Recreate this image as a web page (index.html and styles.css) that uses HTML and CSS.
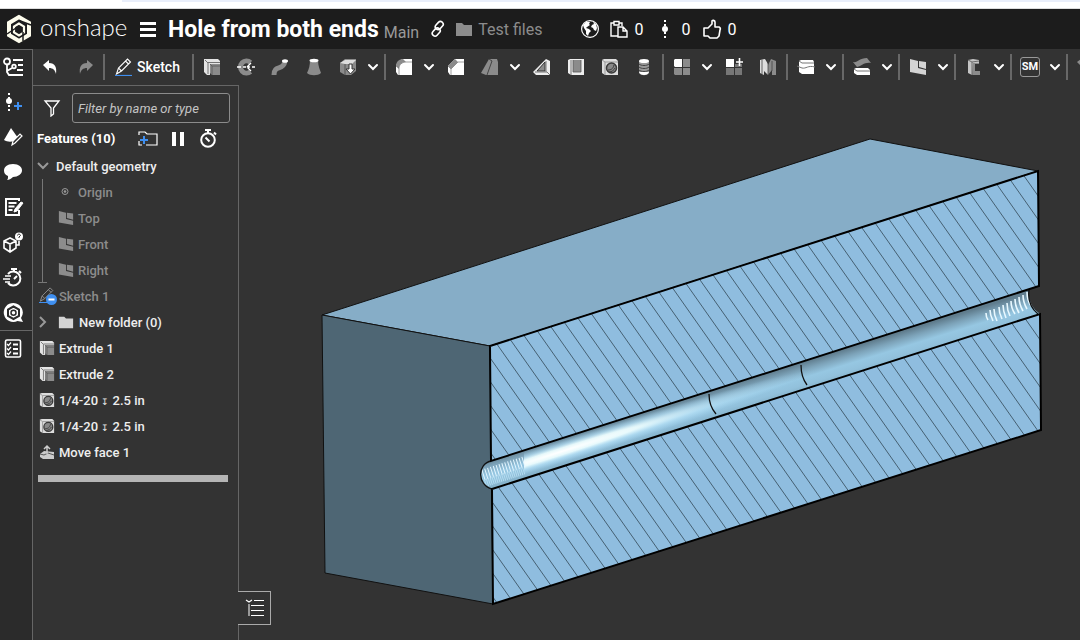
FILE: index.html
```html
<!DOCTYPE html>
<html lang="en">
<head>
    <meta charset="UTF-8">
    <meta name="viewport" content="width=device-width, initial-scale=1.0">
    <title>Hole from both ends</title>
    <link rel="stylesheet" href="styles.css">
</head>
<body>
    <!-- shared icons -->
    <svg class="sprite" aria-hidden="true">
        <symbol id="chevron" viewBox="0 0 16 16"><path d="M4 6l4 4 4-4" fill="none" stroke="#fff" stroke-width="2" stroke-linecap="round"/></symbol>
        <symbol id="extrude" viewBox="0 0 18 18">
            <path d="M1 1h14l2 2v3H7v11H4l-3-3z" fill="#e4e4e4"/>
            <path d="M2 2l3 3v11M5 4.500h12" fill="none" stroke="#555" stroke-width=".8"/>
            <path d="M7 6h10v11H9l-2-2z" fill="#8b8b8b"/>
            <path d="M7 6l2 2h8M9 8v9" fill="none" stroke="#555" stroke-width=".8"/>
        </symbol>
        <symbol id="hole" viewBox="0 0 18 18">
            <path d="M1 2l2-1h12l2 2v14H4l-3-2z" fill="#ddd"/>
            <path d="M1 2l3 2h13M4 4v13" fill="none" stroke="#999"/>
            <circle cx="10.500" cy="10" r="5" fill="#888" stroke="#3a3a3a" stroke-width="1.500"/>
            <path d="M7 12c3 0 5-1 6-5M8 14c3 0 5-2 6-4" fill="none" stroke="#3a3a3a"/>
        </symbol>
        <symbol id="plane" viewBox="0 0 18 18">
            <path d="M1 1l8 2v7l8 2v5L1 14z" fill="currentColor"/>
            <path d="M10 3l7 1v7l-7-2z" fill="currentColor"/>
        </symbol>
        <symbol id="folder" viewBox="0 0 18 16"><path d="M1 2h6l2 2h8v11H1z" fill="currentColor"/></symbol>
        <symbol id="pencil" viewBox="0 0 18 18">
            <path d="M1.500 16l2-6 9-9 3 3-9 9zM10.500 3l3 3M3.500 10l3 3" fill="none" stroke="currentColor" stroke-width="1.100"/>
            <path d="M0 17.500h17" stroke="#3f8ff0" stroke-width="1.200"/>
        </symbol>
    </svg>

    <div class="browser-strip"><span></span></div>

    <header class="topbar">
        <a class="brand" href="#">
            <svg width="26" height="30" viewBox="0 0 26 30">
                <path d="M13 3L3 9v12l10 6 10-6V9z" fill="none" stroke="#fdfcec" stroke-width="4"/>
                <path d="M13 9.500L8 12.500v6l5 3 5-3v-6z" fill="#1c1c1c" stroke="#fdfcec" stroke-width="2.200"/>
                <path d="M13 12l-2.500 1.500v3.500M1 20l9-6M25 11L13 6.500M17 27V18" fill="none" stroke="#1c1c1c" stroke-width="1.500"/>
            </svg>
            <span>onshape</span>
        </a>
        <button class="menu" aria-label="Menu"><i></i><i></i><i></i></button>
        <h1>Hole from both ends</h1>
        <span class="workspace">Main</span>
        <button class="link" aria-label="Link">
            <svg width="16" height="18" viewBox="0 0 16 18" fill="none" stroke="#fff" stroke-width="1.600">
                <rect x="6.500" y="1" width="5.500" height="9" rx="2.700" transform="rotate(42 9.200 5.500)"/>
                <rect x="3.500" y="7.500" width="5.500" height="9" rx="2.700" transform="rotate(42 6.200 12)"/>
            </svg>
        </button>
        <a class="location" href="#"><svg width="18" height="16"><use href="#folder"/></svg>Test files</a>
        <div class="stats">
            <svg width="20" height="20" viewBox="0 0 20 20">
                <circle cx="10" cy="10" r="8.400" fill="none" stroke="#fff" stroke-width="1.200"/>
                <path d="M3 6l3-3 4 0-1 2 1 1-3 2-1 1 3 1 2 2-2 2-1 3-2-2v-3L4 9zM13 3l3 2 1 4-1 3-2-1-1-2-2-1 1-2 2-1z" fill="#fff"/>
            </svg>
            <span class="stat copies">
                <svg width="20" height="20" viewBox="0 0 20 20" fill="none" stroke="#fff" stroke-width="1.400">
                    <path d="M9 17H2V4h3M10 4h3v3M5 2.500h5V6H5z"/>
                    <path d="M9 8h5l4 4v6H9zM14 8v4h4"/>
                </svg>0</span>
            <span class="stat versions">
                <svg width="12" height="20" viewBox="0 0 12 20">
                    <path d="M6 1v18" stroke="#fff" stroke-width="2" stroke-dasharray="2 2"/>
                    <circle cx="6" cy="10" r="3" fill="#fff"/>
                </svg>0</span>
            <span class="stat likes">
                <svg width="20" height="20" viewBox="0 0 20 20" fill="none" stroke="#fff" stroke-width="1.600" stroke-linejoin="round">
                    <path d="M2 9h4l4-4V2c0-1 3-1 3 1v5h4q2 1 1 3l-1 6-2 2H8l-2-2H2z"/>
                </svg>0</span>
        </div>
    </header>

    <div class="workspace-area">
        <nav class="rail">
            <button aria-label="Feature list">
                <svg width="22" height="22" viewBox="0 0 22 22" fill="none" stroke="#fff" stroke-width="1.800">
                    <circle cx="5" cy="4.500" r="3"/><circle cx="12" cy="9.500" r="1.800"/>
                    <path d="M5 7.500V15l2 3h4M5 14l5-3M11 3h10M16 8h5M15 13h6M11 18h10"/>
                </svg>
            </button>
            <button aria-label="Versions">
                <svg width="22" height="22" viewBox="0 0 22 22">
                    <path d="M7 1v18" stroke="#fff" stroke-width="2" stroke-dasharray="2 2"/>
                    <circle cx="7" cy="9" r="3" fill="#fff"/><path d="M12 14h8M16 10v8" stroke="#3f8ff0" stroke-width="2"/>
                </svg>
            </button>
            <button aria-label="Appearance">
                <svg width="22" height="22" viewBox="0 0 22 22">
                    <path d="M9 1L2 13c3 2 7 2 10 1l4-3z" fill="#fff"/>
                    <path d="M10 18l1-4 7-7 2 2-7 7z" fill="#2b2b2b" stroke="#fff" stroke-width="1.200"/>
                </svg>
            </button>
            <button aria-label="Comments">
                <svg width="22" height="22" viewBox="0 0 22 22"><path d="M11 2c6 0 9 3 9 6.500S16 15 11 15c-2 2-4 3-6 3 1-1 1-2 1-4-3-1-4-3-4-5.500C2 5 5 2 11 2z" fill="#fff"/></svg>
            </button>
            <button aria-label="Notes">
                <svg width="22" height="22" viewBox="0 0 22 22" fill="none" stroke="#fff" stroke-width="2">
                    <path d="M17 4V2H4v16h13v-5M6.500 6h8M6.500 9.500h6M6.500 13h4"/>
                    <path d="M12 15l1-3 6-7 2 1-6 8z" fill="#fff" stroke-width="1"/>
                </svg>
            </button>
            <button aria-label="Configurations">
                <svg width="22" height="22" viewBox="0 0 22 22" fill="none" stroke="#fff" stroke-width="1.600">
                    <path d="M8 6L2 9v7l6 4 6-4V9zM2 9l6 3 6-3M8 12v8"/>
                    <path d="M14 13h3V9"/><circle cx="17" cy="4.500" r="4" fill="#fff" stroke="none"/>
                    <path d="M15.500 3.500c0-2 3-1.500 3 0L17 5v1" stroke="#2b2b2b" stroke-width="1"/>
                </svg>
            </button>
            <button aria-label="Performance">
                <svg width="22" height="22" viewBox="0 0 22 22" fill="none" stroke="#fff" stroke-width="2">
                    <path d="M6 7a7 7 0 1 1 0 9M9 2h6M12 2v3M17 4l2 2M12 12l3-3"/><path d="M3 9h6M1 12h7M3 15h5" stroke-width="1.300"/>
                </svg>
            </button>
            <button aria-label="Help">
                <svg width="22" height="22" viewBox="0 0 22 22">
                    <path d="M11.500 1a9.500 9.500 0 1 0 4 18l5.500 1-2-4A9.500 9.500 0 0 0 11.500 1z" fill="#fff"/>
                    <path d="M11.500 4.500l-5.500 3v6.500l5.500 3 5.500-3V7.500z" fill="none" stroke="#2b2b2b" stroke-width="2"/>
                    <circle cx="11.500" cy="10.800" r="2.500" fill="none" stroke="#2b2b2b" stroke-width="1.500"/>
                </svg>
            </button>
            <button class="split" aria-label="Checklist">
                <svg width="22" height="22" viewBox="0 0 22 22" fill="none" stroke="#fff" stroke-width="1.600">
                    <rect x="3.500" y="2" width="15" height="17" rx="1.500"/><path d="M11 6.500h5M11 11h5M11 15.500h5" stroke-width="2"/>
                    <path d="M5 6l1.500 1.500L9 4.500M5 10.500l1.500 1.500L9 9M5 15l1.500 1.500L9 13.500" stroke-width="1.200"/>
                </svg>
            </button>
        </nav>

        <div class="content">
            <div class="toolbar">
                <button class="tool"><svg width="18" height="18" viewBox="0 0 18 18"><path d="M1 7l6-5v3c6 0 8 4 7 11-1-4-3-6-7-6v3z" fill="#fff"/></svg></button>
                <button class="tool"><svg width="18" height="18" viewBox="0 0 18 18"><path d="M17 7l-6-5v3C5 5 3 9 4 16c1-4 3-6 7-6v3z" fill="#8b8b8b"/></svg></button>
                <hr>
                <button class="sketch"><svg width="18" height="18"><use href="#pencil"/></svg>Sketch</button>
                <hr>
                <button class="tool"><svg width="18" height="18"><use href="#extrude"/></svg></button>
                <button class="tool"><svg width="18" height="18" viewBox="0 0 18 18"><path d="M13.500 4.500a6 6 0 1 0 0 9" fill="none" stroke="#8b8b8b" stroke-width="5"/><path d="M0 9h4M6 9h3M11 9h2M15 9h3M10 9l4-4M10 9l4 4" stroke="#fff" stroke-width="1.300"/></svg></button>
                <button class="tool"><svg width="18" height="18" viewBox="0 0 18 18"><path d="M3 17c0-11 9-3 11-14" fill="none" stroke="#8b8b8b" stroke-width="5"/><ellipse cx="14" cy="3" rx="3" ry="1.800" fill="#fff"/></svg></button>
                <button class="tool"><svg width="18" height="18" viewBox="0 0 18 18"><path d="M5 2h8c0 6 2 10 3 13-3 3-11 3-14 0 2-4 3-8 3-13z" fill="#8b8b8b"/><ellipse cx="9" cy="2.500" rx="4.500" ry="1.800" fill="#fff"/></svg></button>
                <button class="tool"><svg width="18" height="18" viewBox="0 0 18 18"><path d="M1 5l5-4h11v12l-5 4H6l-5-3z" fill="#8b8b8b"/><path d="M1 5l5-3h11l-4 4H6z" fill="#ddd"/><path d="M6 6v11" stroke="#555"/><path d="M10 6h3v5h3l-4.500 5L7 11h3z" fill="#fff" stroke="#333"/></svg></button>
                <button class="more"><svg width="16" height="16"><use href="#chevron"/></svg></button>
                <hr>
                <button class="tool"><svg width="18" height="18" viewBox="0 0 18 18"><path d="M7 1h10v16H3l-2-3V7z" fill="#fff"/><path d="M1 8c0-4 3-7 7-7l3 3c-5 0-7 3-7 7z" fill="#8b8b8b"/><path d="M1 8l3 2v7M4 10c0-3 3-6 7-6h6" fill="none" stroke="#777" stroke-width=".7"/></svg></button>
                <button class="more"><svg width="16" height="16"><use href="#chevron"/></svg></button>
                <button class="tool"><svg width="18" height="18" viewBox="0 0 18 18"><path d="M8 1h9v16H3l-2-3V8z" fill="#fff"/><path d="M1 8l7-7 3 3-7 7z" fill="#8b8b8b"/><path d="M1 8l3 3v6M4 11l7-7h6" fill="none" stroke="#777" stroke-width=".7"/></svg></button>
                <button class="tool"><svg width="18" height="18" viewBox="0 0 18 18"><path d="M8 1h8l1 3v13H5l-5-2z" fill="#8b8b8b"/><path d="M8 1l3 2-5 14" fill="none" stroke="#444"/></svg></button>
                <button class="more"><svg width="16" height="16"><use href="#chevron"/></svg></button>
                <button class="tool"><svg width="18" height="18" viewBox="0 0 18 18"><path d="M13 1l4 2v14H3l-3-3z" fill="#eee"/><path d="M12 4v9H4z" fill="#8b8b8b" stroke="#333"/><path d="M13 3v11M2 14l12 0 3 3" fill="none" stroke="#777"/></svg></button>
                <button class="tool"><svg width="18" height="18" viewBox="0 0 18 18"><path d="M1 2l2-1h14v16H4l-3-2z" fill="#eee"/><path d="M6 2h8v12H6z" fill="#8b8b8b"/><path d="M4 2v15M6 2v12h8V2" fill="none" stroke="#555" stroke-width=".8"/></svg></button>
                <button class="tool"><svg width="18" height="18"><use href="#hole"/></svg></button>
                <button class="tool"><svg width="18" height="18" viewBox="0 0 18 18"><path d="M4 3v12c2 3 8 3 10 0V3z" fill="#999"/><ellipse cx="9" cy="3" rx="5" ry="2" fill="#fff"/><path d="M4 14c1 4 9 4 10 0" fill="#fff"/><path d="M4 6c2 2 8 2 10 0M4 9c2 2 8 2 10 0M4 12c2 2 8 2 10 0" fill="none" stroke="#444"/></svg></button>
                <hr>
                <button class="tool"><svg width="18" height="18" viewBox="0 0 18 18"><path d="M1 2l1-1h7v8H2l-1-1z" fill="#fff"/><path d="M10 1h7v8h-7zM1 10h8v7H2l-1-1zM10 10h7v7h-7z" fill="#8b8b8b"/></svg></button>
                <button class="more"><svg width="16" height="16"><use href="#chevron"/></svg></button>
                <button class="tool"><svg width="18" height="18" viewBox="0 0 18 18"><path d="M1 1h8v8H1z" fill="#fff"/><path d="M10 6h7v3h-7zM1 10h8v7H1zM10 10h7v7h-7z" fill="#777"/><path d="M11 4h7M14.500 0v8" stroke="#fff" stroke-width="1.600"/></svg></button>
                <button class="tool"><svg width="18" height="18" viewBox="0 0 18 18"><path d="M1 2l5-1 3 5v11l-4-4v4l-4-2z" fill="#ddd"/><path d="M17 3l-5-2-3 6v10l4-5v5h4z" fill="#8b8b8b"/><path d="M3 2v14M9 1v16M13 3v10" stroke="#444" stroke-width=".8"/></svg></button>
                <hr>
                <button class="tool"><svg width="18" height="18" viewBox="0 0 18 18"><path d="M2 3l2-1h12l1 2v12H5l-3-2z" fill="#fff"/><path d="M2 3l3 2h12M0 8l5 2c4 1 6-3 13-1" fill="none" stroke="#777"/></svg></button>
                <button class="more"><svg width="16" height="16"><use href="#chevron"/></svg></button>
                <hr>
                <button class="tool"><svg width="18" height="18" viewBox="0 0 18 18"><path d="M0 4c5 1 6-4 14-4l4 5c-7-1-9 3-14 4z" fill="#8b8b8b"/><path d="M1 11l2-1h12l2 2v5H4l-3-2z" fill="#fff"/><path d="M1 11l3 2h13" fill="none" stroke="#777"/></svg></button>
                <button class="more"><svg width="16" height="16"><use href="#chevron"/></svg></button>
                <hr>
                <button class="tool"><svg width="18" height="18"><use href="#plane"/></svg></button>
                <button class="more"><svg width="16" height="16"><use href="#chevron"/></svg></button>
                <hr>
                <button class="tool"><svg width="18" height="18" viewBox="0 0 18 18"><path d="M3 2l5-1 6 1v4h-4v7h5v4H7l-4-2z" fill="#c4c4c4"/><path d="M8 5h6v1h-4v7h5v4H7z" fill="#8b8b8b"/><path d="M3 2l4 2v13M7 4l7-1" fill="none" stroke="#555" stroke-width=".8"/></svg></button>
                <button class="more"><svg width="16" height="16"><use href="#chevron"/></svg></button>
                <hr>
                <button class="tool"><span class="sm">SM</span></button>
                <button class="more"><svg width="16" height="16"><use href="#chevron"/></svg></button>
                <hr>
                <button class="tool"><svg width="18" height="18" viewBox="0 0 18 18"><path d="M0 4l4-3 6 5-4 4z" fill="#8b8b8b"/><path d="M3 12h9v5H3z" fill="#ddd"/></svg></button>
            </div>

            <div class="stage">
                <aside class="panel">
                    <div class="filter">
                        <label for="filterInput" aria-label="Filter"><svg width="18" height="18" viewBox="0 0 18 18"><path d="M2 2h14l-5.500 7v6L8 17V9z" fill="none" stroke="#fff" stroke-width="1.300"/></svg></label>
                        <input type="text" id="filterInput" placeholder="Filter by name or type">
                    </div>
                    <div class="features">
                        <h2>Features (10)</h2>
                        <button aria-label="Add folder"><svg width="20" height="18" viewBox="0 0 20 18"><path d="M1 6V3h6l2 2h10v11H8M1 12v4h3" fill="none" stroke="#fff" stroke-width="1.200"/><path d="M2 11h8M6 7v8" stroke="#3f8ff0" stroke-width="2"/></svg></button>
                        <button aria-label="Pause"><svg width="20" height="18" viewBox="0 0 20 18"><path d="M4 3h4v14H4zM12 3h4v14h-4z" fill="#fff"/></svg></button>
                        <button aria-label="Regeneration times"><svg width="20" height="20" viewBox="0 0 20 20"><circle cx="10" cy="12" r="6.800" fill="none" stroke="#fff" stroke-width="2"/><path d="M7 2h6M10 2v3M16 4.500l2 2M7.500 9.500l4 4" stroke="#fff" stroke-width="2"/></svg></button>
                    </div>
                    <ul class="tree">
                        <li class="group"><svg width="16" height="16" viewBox="0 0 16 16"><path d="M3 5l5 5 5-5" fill="none" stroke="#999" stroke-width="2"/></svg>Default geometry</li>
                        <li class="children">
                            <ul>
                                <li><svg width="16" height="16" viewBox="0 0 16 16"><circle cx="7" cy="7.500" r="3" fill="none" stroke="#999"/><circle cx="7" cy="7.500" r="1.300" fill="#999"/></svg>Origin</li>
                                <li><svg width="16" height="16"><use href="#plane"/></svg>Top</li>
                                <li><svg width="16" height="16"><use href="#plane"/></svg>Front</li>
                                <li><svg width="16" height="16"><use href="#plane"/></svg>Right</li>
                            </ul>
                        </li>
                        <li class="muted"><svg width="18" height="18" viewBox="0 0 18 18"><use href="#pencil" width="16" height="16"/><circle cx="12.500" cy="12.500" r="5.500" fill="#3f8ff0"/><path d="M9.500 12.500h6" stroke="#fff" stroke-width="2"/></svg>Sketch 1</li>
                        <li class="group"><svg width="16" height="16" viewBox="0 0 16 16"><path d="M5 3l5 5-5 5" fill="none" stroke="#999" stroke-width="2"/></svg><svg class="folder" width="16" height="16"><use href="#folder"/></svg>New folder (0)</li>
                        <li><svg width="16" height="16"><use href="#extrude"/></svg>Extrude 1</li>
                        <li><svg width="16" height="16"><use href="#extrude"/></svg>Extrude 2</li>
                        <li><svg width="16" height="16"><use href="#hole"/></svg><span>1/4-20 <span class="depth">↧</span> 2.5 in</span></li>
                        <li><svg width="16" height="16"><use href="#hole"/></svg><span>1/4-20 <span class="depth">↧</span> 2.5 in</span></li>
                        <li><svg width="16" height="16" viewBox="0 0 16 16"><path d="M1 10l4-3 10 1v7H4l-3-2z" fill="#ccc"/><path d="M1 10l4 1 4-2 6 2" fill="none" stroke="#555"/><path d="M8 10V3M5 5l3-3 3 3" fill="none" stroke="#ccc" stroke-width="1.500"/></svg>Move face 1</li>
                    </ul>
                    <div class="rollback"></div>
                </aside>

                <main class="canvas">
                    <svg class="model" viewBox="239 85 841 555" preserveAspectRatio="xMinYMin meet">
                        <defs>
                            <clipPath id="section">
                                <path d="M490 346l548-175 1 115-548 175zM492 489l548-175 1 116-548 174z"/>
                            </clipPath>
                            <linearGradient id="bore" gradientUnits="userSpaceOnUse" x1="700" y1="394" x2="708" y2="420">
                                <stop offset="0" stop-color="#607d8e"/>
                                <stop offset=".25" stop-color="#7ca2b8"/>
                                <stop offset=".55" stop-color="#96c7e2"/>
                                <stop offset=".8" stop-color="#92c1dc"/>
                                <stop offset="1" stop-color="#86b3cc"/>
                            </linearGradient>
                            <radialGradient id="shine" gradientUnits="userSpaceOnUse" cx="0" cy="0" r="1" gradientTransform="translate(560 452) rotate(-17.700) scale(270 11)">
                                <stop offset="0" stop-color="#fff"/>
                                <stop offset=".3" stop-color="#f0ffff" stop-opacity=".9"/>
                                <stop offset=".6" stop-color="#c4ecff" stop-opacity=".5"/>
                                <stop offset="1" stop-color="#b0e0fa" stop-opacity="0"/>
                            </radialGradient>
                        </defs>
                        <path d="M322 315L870 139l168 32-548 175z" fill="#86adc7" stroke="#111"/>
                        <path d="M322 315l168 31 3 258-168-31z" fill="#4e6674" stroke="#111"/>
                        <path d="M490 346l548-175 1 115-548 175zM492 489l548-175 1 116-548 174z" fill="#8fbddf"/>
                        <path id="hatch" clip-path="url(#section)" fill="none" stroke="#466072"/>
                        <path d="M491 461l538-172q-2 16 11 25L492 489c-15-3-15-25-1-28z" fill="url(#bore)"/>
                        <path d="M524 450.500l500-160v28l-500 160z" fill="url(#shine)"/>
                        <!-- threads -->
                        <path d="M483 475l41-13" stroke="#e4f6ff" stroke-width="11" stroke-dasharray="1 2" fill="none"/>
                        <path d="M485 483l39-12.500" stroke="#b4dcf0" stroke-width="8" stroke-dasharray="1 1" fill="none"/>
                        <path d="M986 313q0 4 2 7m2-10q0 5 3 11m1-12q0 6 3 12m2-14q0 6 3 12m1-14q0 6 3 13m1-15q0 7 3 13m1-15q0 7 4 13m0-15q0 7 4 14m0-16q0 7 4 14m0-16q0 7 4 14m0-17q0 8 4 14" fill="none" stroke="#e8f8ff" stroke-width="1.600"/>
                        <path d="M491 461c-14 3-14 24 1 28M709 394q0 12 7 20M801 365q0 12 6 20M1029 290q-2 15 9 24" fill="none" stroke="#111" stroke-width="1.300"/>
                        <path d="M1038 171l1 115-548 175-1-115zM1040 314l1 116-548 174-1-115z" fill="none" stroke="#000" stroke-width="2"/>
                    </svg>
                    <button class="list-tab" aria-label="Parts list">
                        <svg width="20" height="20" viewBox="0 0 20 20"><path d="M5 6v12" stroke="#999" stroke-width="2"/><path d="M2 2l3 2 3-2M10 2.500h10M7 7.500h13M7 12.500h13M7 17.500h13" fill="none" stroke="#fff" stroke-width="1.200"/></svg>
                    </button>
                </main>
            </div>
        </div>
    </div>

    <script>
        // section hatch: parallel lines, clipped to the cut faces
        const hatch = document.getElementById('hatch');
        const spacing = 16.55;
        let lines = '';
        for (let i = 0; i < 54; i++) {
            lines += `M${143.1 + i * spacing} 100l380 540`;
        }
        hatch.setAttribute('d', lines);
    </script>
</body>
</html>
```

FILE: styles.css
```css
* {
    box-sizing: border-box;
}
body {
    font-family: Roboto, Arial, sans-serif;
    font-size: 14px;
    background-color: #333333;
    color: #ffffff;
    display: flex;
    flex-direction: column;
    height: 100vh;
    margin: 0;
    overflow: hidden;
}
button {
    display: flex;
    align-items: center;
    justify-content: center;
    padding: 0;
    border: none;
    background: none;
    color: inherit;
    font: inherit;
    cursor: pointer;
}
svg {
    display: block;
    flex-shrink: 0;
}
a {
    color: inherit;
    text-decoration: none;
}
ul {
    list-style: none;
    margin: 0;
    padding: 0;
}
.sprite {
    display: none;
}
.browser-strip {
    flex-shrink: 0;
    height: 9px;
    background-color: #ffffff;
    border-bottom: 1px solid #dddddd;
}
.browser-strip span {
    display: block;
    height: 2px;
    margin-left: 122px;
    background-color: #e9eefa;
}

/* document bar */
.topbar {
    display: flex;
    align-items: center;
    flex-shrink: 0;
    height: 40px;
    padding-left: 6px;
    background-color: #1c1c1c;
    white-space: nowrap;
}
.brand {
    display: flex;
    align-items: center;
    gap: 8px;
    width: 134px;
}
.brand span {
    font-family: Lato, sans-serif;
    font-size: 24px;
    font-weight: 300;
    line-height: 28px;
    padding-bottom: 4px;
}
.menu {
    flex-direction: column;
    gap: 3px;
    width: 16px;
}
.menu i {
    width: 16px;
    height: 3px;
    background-color: #ffffff;
}
.topbar h1 {
    margin: 0 0 0 12px;
    font-size: 23px;
    font-weight: bold;
}
.workspace {
    margin-left: 5px;
    padding-top: 6px;
    font-size: 16px;
    color: #999999;
}
.link {
    margin-left: 11px;
}
.location {
    display: flex;
    align-items: center;
    gap: 5px;
    margin-left: 9px;
    font-size: 16px;
    color: #8c8c8c;
}
.stats {
    display: flex;
    align-items: center;
    margin-left: 38px;
    font-size: 16px;
}
.stat {
    display: flex;
    align-items: center;
    gap: 5px;
}
.copies {
    margin-left: 9px;
}
.versions {
    gap: 10px;
    margin-left: 16px;
}
.likes {
    margin-left: 12px;
}

.workspace-area {
    display: flex;
    flex: 1;
    min-height: 0;
}
.rail {
    width: 33px;
    flex-shrink: 0;
    border-top: 1px solid #666666;
    border-right: 1px solid #666666;
    background-color: #2b2b2b;
}
.rail button {
    width: 100%;
    height: 35px;
    padding-right: 6px;
}
.rail .split {
    height: 36px;
    border-top: 1px solid #666666;
}
.content {
    display: flex;
    flex-direction: column;
    flex: 1;
    min-width: 0;
}

/* tools */
.toolbar {
    display: flex;
    align-items: center;
    flex-shrink: 0;
    height: 36px;
    padding-left: 1px;
    overflow: hidden;
}
.toolbar hr {
    flex-shrink: 0;
    width: 2px;
    height: 26px;
    margin: 0 1px;
    border: none;
    background-color: #686868;
}
.tool {
    flex-shrink: 0;
    width: 34px;
    height: 34px;
    color: #d4d4d4;
}
.more {
    flex-shrink: 0;
    width: 18px;
    height: 34px;
    padding-right: 2px;
}
.sketch {
    flex-shrink: 0;
    gap: 4px;
    width: 85px;
    height: 34px;
    padding-right: 2px;
    font-weight: 500;
}
.sm {
    width: 20px;
    height: 20px;
    border: 1px solid #999999;
    border-radius: 3px;
    color: #ffffff;
    font-size: 11px;
    font-weight: bold;
    line-height: 18px;
}

.stage {
    display: flex;
    flex: 1;
    min-height: 0;
}
.panel {
    width: 206px;
    flex-shrink: 0;
    border-top: 1px solid #666666;
    border-right: 1px solid #666666;
}
.filter {
    display: flex;
    align-items: center;
    gap: 11px;
    padding: 7px 8px 0 10px;
}
.filter input {
    flex: 1;
    min-width: 0;
    height: 30px;
    padding: 0 5px;
    border: 1px solid #8c8c8c;
    border-radius: 3px;
    background: none;
    color: #ffffff;
    font: italic 13px Roboto, Arial, sans-serif;
}
.filter input::placeholder {
    color: #c4c4c4;
}
.features {
    display: flex;
    align-items: center;
    gap: 10px;
    height: 30px;
    padding-left: 4px;
}
.features h2 {
    width: 91px;
    margin: 0;
    font-size: 13px;
    font-weight: bold;
}
.tree {
    font-size: 13px;
    font-weight: 500;
    color: #eeeeee;
}
.tree li {
    display: flex;
    align-items: center;
    gap: 4px;
    height: 26px;
    padding-left: 6px;
    white-space: nowrap;
}
.tree .group {
    gap: 5px;
    padding-left: 2px;
}
.tree .folder {
    margin-left: 2px;
    color: #d4d4d4;
}
.tree .depth {
    font-size: 9px;
}
.tree .children {
    height: auto;
    padding-left: 9px;
    color: #8c8c8c;
}
.children ul {
    flex: 1;
    border-left: 1px solid #777777;
}
.children ul::after {
    content: '';
    display: block;
    width: 9px;
    height: 1px;
    margin: -1px 0 0 -5px;
    background-color: #777777;
}
.children ul li {
    padding-left: 15px;
}
.tree .muted {
    gap: 2px;
    color: #8c8c8c;
}
.rollback {
    height: 7px;
    margin: 10px 10px 0 5px;
    background-color: #b5b5b5;
}

.canvas {
    position: relative;
    flex: 1;
    min-width: 0;
}
.model {
    width: 100%;
    height: 100%;
}
.list-tab {
    position: absolute;
    left: -1px;
    bottom: 15px;
    width: 33px;
    height: 34px;
    border: 1px solid #aaaaaa;
    border-left: none;
    background-color: #333333;
}
```
